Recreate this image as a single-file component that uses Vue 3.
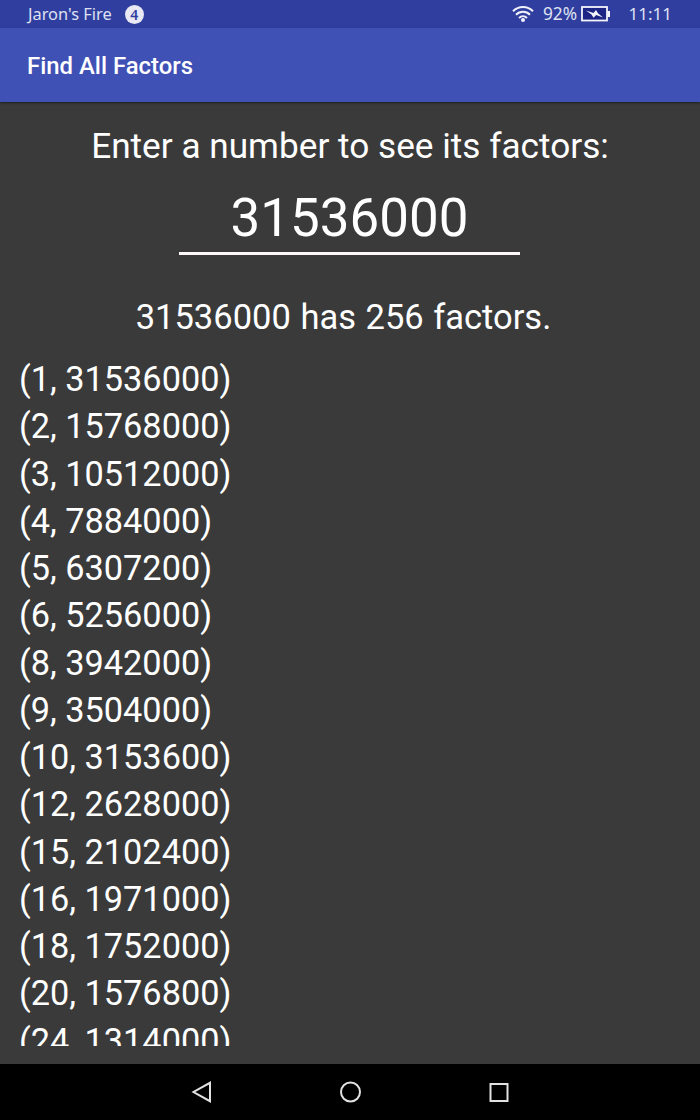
<script setup>
import { ref, computed } from 'vue';

const number = ref('31536000');
const visibleRows = 15;

const pairs = computed(() => {
  const n = Number(number.value);
  const found = [];
  for (let i = 1; i * i <= n; i++) {
    if (n % i === 0) found.push([i, n / i]);
  }
  return found;
});

const total = computed(() => {
  const last = pairs.value[pairs.value.length - 1];
  if (!last) return 0;
  return pairs.value.length * 2 - (last[0] === last[1] ? 1 : 0);
});

const rows = computed(() => pairs.value.slice(0, visibleRows));
</script>

<template>
<div class="screen">
  <div class="status-bar">
    <span class="device">Jaron's Fire</span>
    <span class="badge">4</span>
    <svg class="wifi" width="22" height="18" viewBox="0 0 22 18">
      <g fill="none" stroke="#f0f1fa" stroke-width="2">
        <path d="M1 6.3C6.5 0.6 15.5 0.6 21 6.3" />
        <path d="M4 9.7C8 5.8 14 5.8 18 9.7" />
        <path d="M7 12.9C9.3 10.8 12.7 10.8 15 12.9" />
      </g>
      <circle cx="11" cy="15.1" r="2" fill="#f0f1fa" />
    </svg>
    <span class="percent">92%</span>
    <svg class="battery" width="29" height="16" viewBox="0 0 29 16">
      <rect x="1" y="1" width="25" height="13.5" fill="#1c2583" stroke="#f4f4fc" stroke-width="1.8" />
      <rect x="26.5" y="5" width="2.5" height="6" fill="#f4f4fc" />
      <path d="M5 4.5L12.5 7L15 4L17 7.2L22 11.5L15.2 9L12.5 11.8L10.5 8.5Z" fill="#f4f4fc" />
    </svg>
    <span class="clock">11:11</span>
  </div>
  <header class="app-bar">
    <h1>Find All Factors</h1>
  </header>
  <main class="content">
    <label class="prompt" for="number">Enter a number to see its factors:</label>
    <input id="number" v-model="number" class="number" inputmode="numeric">
    <p class="result">{{ number }} has {{ total }} factors.</p>
    <ul class="factors">
      <li v-for="pair in rows" :key="pair[0]">({{ pair[0] }}, {{ pair[1] }})</li>
    </ul>
  </main>
  <nav class="nav-bar">
    <svg width="24" height="24" viewBox="0 0 24 24">
      <path d="M20 2.8V21.2L3.5 12Z" />
    </svg>
    <svg width="24" height="24" viewBox="0 0 24 24">
      <circle cx="12.5" cy="12" r="9.5" />
    </svg>
    <svg width="24" height="24" viewBox="0 0 24 24">
      <rect x="3.5" y="4" width="17" height="17" />
    </svg>
  </nav>
</div>
</template>

<style>
body {
  margin: 0;
}
</style>

<style scoped>
.screen {
  display: flex;
  flex-direction: column;
  width: 700px;
  height: 1120px;
  overflow: hidden;
  background: #3a3a3a;
  color: #ffffff;
  font-family: Roboto, sans-serif;
}
.status-bar {
  display: flex;
  align-items: center;
  height: 28px;
  padding: 0 28px;
  box-sizing: border-box;
  background: #303f9f;
  color: #dfe1f2;
  font-family: "Noto Sans", "Open Sans", sans-serif;
  font-size: 16.4px;
}
.device,
.percent,
.clock {
  padding-bottom: 2px;
}
.badge {
  width: 19px;
  height: 19px;
  margin-left: 13px;
  border-radius: 50%;
  background: #e8e9f5;
  color: #303f9f;
  font-size: 14px;
  font-weight: 600;
  line-height: 19px;
  text-align: center;
}
.wifi {
  margin-left: auto;
}
.percent {
  margin-left: 9px;
  font-size: 17.3px;
}
.battery {
  margin-left: 4px;
}
.clock {
  margin-left: 18.5px;
  font-size: 17px;
}
.app-bar {
  display: flex;
  align-items: center;
  height: 74px;
  padding: 2px 27px 0;
  box-sizing: border-box;
  background: #3f51b5;
  box-shadow: 0 1px 2px rgba(0, 0, 0, 0.5);
}
h1 {
  margin: 0;
  font-size: 23.9px;
  font-weight: 500;
}
.content {
  display: flex;
  flex: 1;
  flex-direction: column;
  align-items: center;
  min-height: 0;
  padding: 24px 19px 18px;
  font-size: 34.3px;
}
.prompt {
  font-size: 35.2px;
  line-height: 41px;
}
.number {
  width: 341px;
  height: 71px;
  margin: 17px 1px 0 0;
  padding: 0 0 1px;
  box-sizing: border-box;
  border: 0;
  border-bottom: 3px solid #fff8fb;
  outline: 0;
  background: transparent;
  color: #ffffff;
  font: 52.9px Roboto, sans-serif;
  text-align: center;
}
.result {
  margin: 42px 13px 0 0;
  font-size: 34.5px;
  line-height: 41px;
  word-spacing: 1px;
}
.factors {
  flex: 1;
  width: 100%;
  min-height: 0;
  margin: 18px 0 0;
  padding: 0;
  overflow: hidden;
  list-style: none;
}
li {
  line-height: 47.25px;
}
.nav-bar {
  display: flex;
  align-items: center;
  justify-content: center;
  gap: 124.5px;
  height: 56px;
  background: #000000;
}
.nav-bar svg {
  fill: none;
  stroke: #e2e2e2;
  stroke-width: 2;
}
</style>
